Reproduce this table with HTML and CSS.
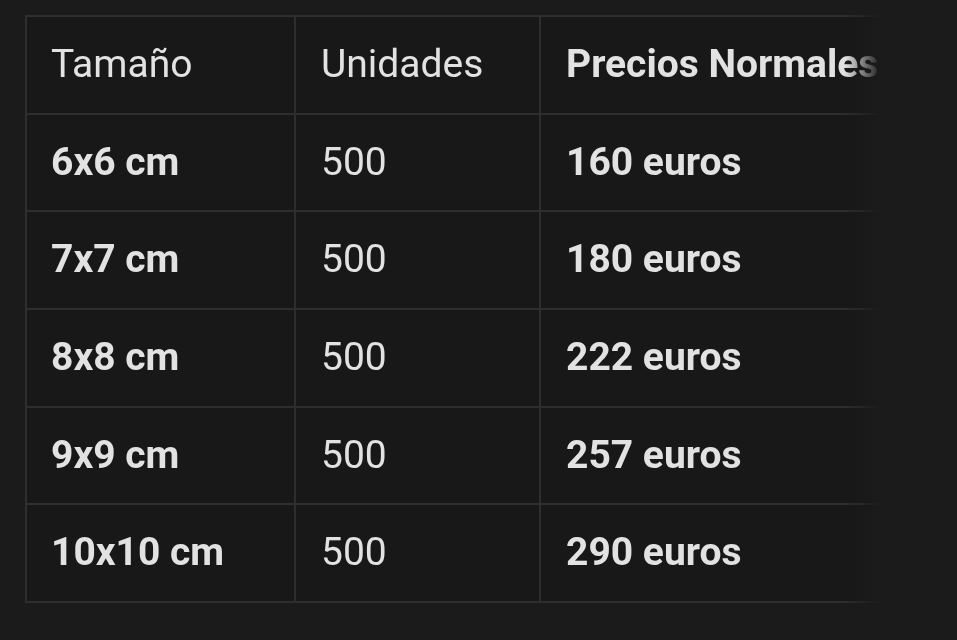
FILE: index.html
```html
<!DOCTYPE html>
<html lang="es">
<head>
<meta charset="utf-8">
<title>Precios</title>
<link rel="stylesheet" href="styles.css">
</head>
<body>
<div class="scroller">
  <table class="prices">
    <thead>
      <tr>
        <th class="c1">Tamaño</th>
        <th class="c2">Unidades</th>
        <th class="c3 strong">Precios Normales</th>
      </tr>
    </thead>
    <tbody>
      <tr><td class="c1 strong">6x6 cm</td><td class="c2">500</td><td class="c3 strong">160 euros</td></tr>
      <tr><td class="c1 strong">7x7 cm</td><td class="c2">500</td><td class="c3 strong">180 euros</td></tr>
      <tr><td class="c1 strong">8x8 cm</td><td class="c2">500</td><td class="c3 strong">222 euros</td></tr>
      <tr><td class="c1 strong">9x9 cm</td><td class="c2">500</td><td class="c3 strong">257 euros</td></tr>
      <tr><td class="c1 strong">10x10 cm</td><td class="c2">500</td><td class="c3 strong">290 euros</td></tr>
    </tbody>
  </table>
</div>
</body>
</html>
```

FILE: styles.css
```css
html, body {
  margin: 0;
  background: #1b1b1b;
}
body {
  padding: 15px 0 0 25px;
  font-family: Roboto, "Liberation Sans", sans-serif;
  color: #e2e2e2;
}
.scroller {
  width: 860px;
  overflow: hidden;
  -webkit-mask-image: linear-gradient(to right, #000 820px, transparent 856px);
  mask-image: linear-gradient(to right, #000 820px, transparent 856px);
}
.prices {
  border-collapse: separate;
  border-spacing: 0;
  table-layout: fixed;
  width: 942px;
  border-top: 2px solid #2e2e2e;
  border-left: 2px solid #2e2e2e;
  background: #181818;
}
.prices th,
.prices td {
  font-size: 39px;
  font-weight: 400;
  line-height: 95.67px;
  padding: 0 0 0 25px;
  text-align: left;
  white-space: nowrap;
  border-right: 2px solid #2e2e2e;
  border-bottom: 2px solid #2e2e2e;
  overflow: hidden;
}
.prices .c1 { width: 243px; padding-left: 24px; }
.prices .c2 { width: 218px; }
.prices .c3 { width: 400px; }
.prices .strong { font-weight: 700; }
```
